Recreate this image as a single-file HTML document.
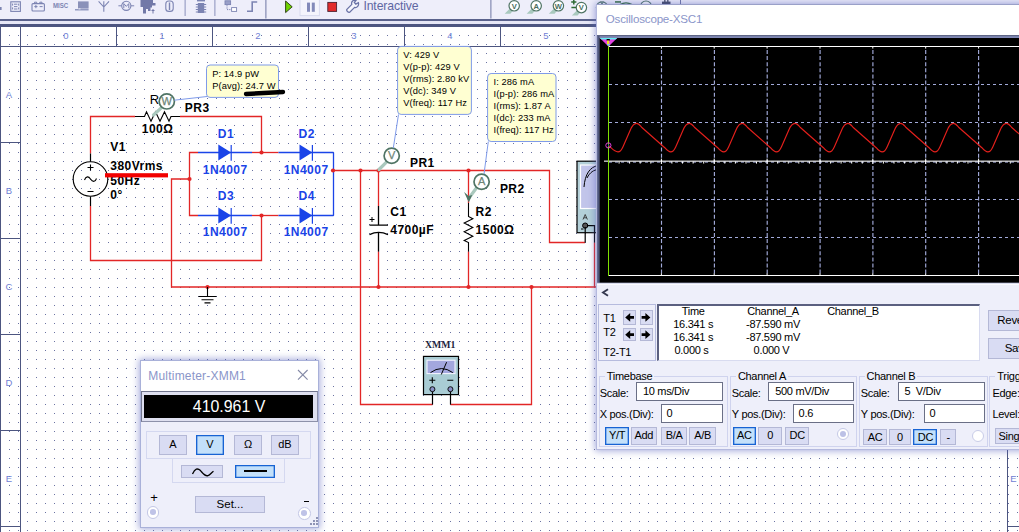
<!DOCTYPE html>
<html>
<head>
<meta charset="utf-8">
<title>Multisim</title>
<style>
html,body{margin:0;padding:0;}
body{width:1019px;height:532px;overflow:hidden;position:relative;background:#fff;font-family:"Liberation Sans",sans-serif;}
.abs{position:absolute;}
#toolbar{left:0;top:0;width:1019px;height:24px;background:#eeeefa;}
#tbline{left:0;top:19px;width:1019px;height:2px;background:#5a628c;}
#tbline2{left:0;top:21px;width:1019px;height:3px;background:#e6e7f6;}
#rtop{left:0;top:24px;width:1019px;height:3px;background:#4c5580;}
#circ{left:0;top:0;}
.t9{font-size:9.3px;fill:#000;letter-spacing:0.1px;}
.bb{font-weight:bold;font-size:12px;fill:#000;letter-spacing:0.47px;}
.bl{font-weight:bold;font-size:12px;fill:#1a44e8;letter-spacing:0.47px;}
/* windows */
.win{position:absolute;background:#eeeffa;border:1px solid #a9b1d9;box-shadow:0 0 7px 1px rgba(90,100,190,0.55);}
.ttl{position:absolute;left:0;top:0;right:0;background:#fff;color:#8a95c9;font-size:12px;}
.btn{position:absolute;background:#d9dcf3;border:1px solid #b4b8d6;box-sizing:border-box;font-size:11px;color:#000;text-align:center;}
.btn.sel{background:#c3e0fa;border:1px solid #1763d3;box-shadow:inset 0 0 0 0.35px #1763d3;}
.lbl{position:absolute;font-size:11px;color:#000;white-space:nowrap;}
.inp{position:absolute;background:#fff;border:1px solid #6a6f86;box-sizing:border-box;font-size:11px;color:#000;white-space:nowrap;}
.grp{position:absolute;border:1px solid #d5d9f0;box-sizing:border-box;}
#scope .lbl,#scope .inp,#scope .btn{letter-spacing:-0.3px;}
</style>
</head>
<body>
<!-- TOOLBAR -->
<div id="toolbar" class="abs"></div>
<div id="tbline" class="abs"></div>
<div id="tbline2" class="abs"></div>
<div id="rtop" class="abs"></div>

<!-- CIRCUIT + RULERS SVG -->
<svg id="circ" class="abs" width="1019" height="532" viewBox="0 0 1019 532">
<defs>
<pattern id="dots" x="9" y="8" width="9" height="9" patternUnits="userSpaceOnUse">
<rect x="0" y="0" width="1" height="1" fill="#6a72a2"/>
</pattern>
</defs>
<rect x="0" y="27" width="1019" height="505" fill="#fff"/>
<rect x="0" y="27" width="1019" height="505" fill="url(#dots)"/>
<!--RULERS-->
<g id="rulers" shape-rendering="crispEdges">
<rect x="0" y="27" width="1" height="505" fill="#4c5580"/>
<rect x="20" y="27" width="1" height="505" fill="#4c5580"/>
<rect x="0" y="46" width="1019" height="1" fill="#4c5580"/>
<rect x="116" y="27" width="1" height="19" fill="#4c5580"/>
<rect x="212" y="27" width="1" height="19" fill="#4c5580"/>
<rect x="308" y="27" width="1" height="19" fill="#4c5580"/>
<rect x="404" y="27" width="1" height="19" fill="#4c5580"/>
<rect x="500" y="27" width="1" height="19" fill="#4c5580"/>
<rect x="596" y="27" width="1" height="19" fill="#4c5580"/>
<rect x="0" y="142" width="20" height="1" fill="#4c5580"/>
<rect x="0" y="238" width="20" height="1" fill="#4c5580"/>
<rect x="0" y="334" width="20" height="1" fill="#4c5580"/>
<rect x="0" y="430" width="20" height="1" fill="#4c5580"/>
<rect x="0" y="526" width="20" height="1" fill="#4c5580"/>
<rect x="1007" y="27" width="1" height="505" fill="#4c5580"/>
<rect x="1007" y="526" width="12" height="1" fill="#4c5580"/>
<text x="66" y="39" text-anchor="middle" font-size="9.5" fill="#6f80d4">0</text>
<text x="162" y="39" text-anchor="middle" font-size="9.5" fill="#6f80d4">1</text>
<text x="258" y="39" text-anchor="middle" font-size="9.5" fill="#6f80d4">2</text>
<text x="354" y="39" text-anchor="middle" font-size="9.5" fill="#6f80d4">3</text>
<text x="450" y="39" text-anchor="middle" font-size="9.5" fill="#6f80d4">4</text>
<text x="546" y="39" text-anchor="middle" font-size="9.5" fill="#6f80d4">5</text>
<text x="9" y="97.5" text-anchor="middle" font-size="9.5" fill="#6f80d4">A</text>
<text x="9" y="193.5" text-anchor="middle" font-size="9.5" fill="#6f80d4">B</text>
<text x="9" y="289.5" text-anchor="middle" font-size="9.5" fill="#6f80d4">C</text>
<text x="9" y="385.5" text-anchor="middle" font-size="9.5" fill="#6f80d4">D</text>
<text x="9" y="481.5" text-anchor="middle" font-size="9.5" fill="#6f80d4">E</text>
<text x="1013.5" y="481.5" text-anchor="middle" font-size="9.5" fill="#6f80d4">E</text>
</g>
<!--WIRES-->
<g id="wires">
<polyline points="90.5,153.5 90.5,116.5 135,116.5" fill="none" stroke="#e22626" stroke-width="1.3"/>
<polyline points="180,116.5 261.5,116.5 261.5,152.5" fill="none" stroke="#e22626" stroke-width="1.3"/>
<polyline points="90.5,206 90.5,260.5 261.5,260.5 261.5,215.5" fill="none" stroke="#e22626" stroke-width="1.3"/>
<polyline points="198,152.5 189.5,152.5 189.5,215.5 198,215.5" fill="none" stroke="#e22626" stroke-width="1.3"/>
<polyline points="189.5,179 171.5,179 171.5,287 597,287" fill="none" stroke="#e22626" stroke-width="1.3"/>
<polyline points="252,152.5 278.5,152.5" fill="none" stroke="#e22626" stroke-width="1.3"/>
<polyline points="252,215.5 278.5,215.5" fill="none" stroke="#e22626" stroke-width="1.3"/>
<polyline points="333.5,152.5 333.5,215.5" fill="none" stroke="#1a44e8" stroke-width="1.3"/>
<polyline points="333.5,170.5 549.5,170.5 549.5,242.5 585,242.5" fill="none" stroke="#e22626" stroke-width="1.3"/>
<polyline points="360.5,170.5 360.5,404.5 432.5,404.5" fill="none" stroke="#e22626" stroke-width="1.3"/>
<polyline points="531.5,287 531.5,404.5 450.5,404.5" fill="none" stroke="#e22626" stroke-width="1.3"/>
<polyline points="378.5,170.5 378.5,206" fill="none" stroke="#e22626" stroke-width="1.3"/>
<polyline points="378.5,251.5 378.5,287" fill="none" stroke="#e22626" stroke-width="1.3"/>
<polyline points="468.5,170.5 468.5,203" fill="none" stroke="#e22626" stroke-width="1.3"/>
<polyline points="468.5,251.5 468.5,287" fill="none" stroke="#e22626" stroke-width="1.3"/>
<polyline points="594.5,242.5 594.5,287" fill="none" stroke="#e22626" stroke-width="1.3"/>
<circle cx="261.5" cy="152.5" r="2.1" fill="#e22626"/>
<circle cx="261.5" cy="215.5" r="2.1" fill="#e22626"/>
<circle cx="189.5" cy="179" r="2.1" fill="#e22626"/>
<circle cx="333" cy="170.5" r="2.1" fill="#e22626"/>
<circle cx="360.5" cy="170.5" r="2.1" fill="#e22626"/>
<circle cx="378.5" cy="170.5" r="2.1" fill="#e22626"/>
<circle cx="468.5" cy="170.5" r="2.1" fill="#e22626"/>
<circle cx="207.5" cy="287" r="2.1" fill="#e22626"/>
<circle cx="378.5" cy="287" r="2.1" fill="#e22626"/>
<circle cx="468.5" cy="287" r="2.1" fill="#e22626"/>
<circle cx="531.5" cy="287" r="2.1" fill="#e22626"/>
</g>
<!--PARTS-->
<g id="parts">
<line x1="90.5" y1="153.5" x2="90.5" y2="161.5" stroke="#000" stroke-width="1.2"/>
<line x1="90.5" y1="196.5" x2="90.5" y2="206" stroke="#000" stroke-width="1.2"/>
<circle cx="90.5" cy="179" r="17.3" fill="none" stroke="#000" stroke-width="1.1"/>
<path d="M87.5,167.5h6M90.5,164.5v6M87.5,191.5h6" stroke="#000" stroke-width="1.1" fill="none"/>
<path d="M84.5,180 C86,176 88.5,176 90.5,179 S95,182.5 96.5,178.5" stroke="#000" stroke-width="1.1" fill="none"/>
<text class="bb" x="110.3" y="151.2">V1</text>
<text class="bb" x="110.3" y="169.5">380Vrms</text>
<text class="bb" x="110.3" y="184.5">50Hz</text>
<text class="bb" x="110.3" y="199.2">0°</text>
<rect x="105" y="173.2" width="63" height="4.2" fill="#f20000"/>
<polyline points="135,116.5 144.5,116.5 146.5,111.8 151,121.2 155.5,111.8 160,121.2 164.5,111.8 169,121.2 171,116.5 180,116.5" fill="none" stroke="#000" stroke-width="1.1"/>
<text class="bb" x="149.8" y="103.8" style="font-weight:normal;font-size:13px">R</text>
<text class="bb" x="141.8" y="133.4">100Ω</text>
<text class="bb" x="184.8" y="112.4">PR3</text>
<line x1="198" y1="152.5" x2="252" y2="152.5" stroke="#1a44e8" stroke-width="1.3"/>
<polygon points="218.3,144.5 231.10000000000002,152.5 218.3,160.5" fill="#1a44e8"/>
<line x1="231.20000000000002" y1="144.9" x2="231.20000000000002" y2="160.7" stroke="#1a44e8" stroke-width="1.2"/>
<text class="bl" x="217.8" y="137.6">D1</text>
<text class="bl" x="202.8" y="173.5">1N4007</text>
<line x1="278.5" y1="152.5" x2="333.5" y2="152.5" stroke="#1a44e8" stroke-width="1.3"/>
<polygon points="299.5,144.5 312.3,152.5 299.5,160.5" fill="#1a44e8"/>
<line x1="312.4" y1="144.9" x2="312.4" y2="160.7" stroke="#1a44e8" stroke-width="1.2"/>
<text class="bl" x="298.6" y="137.6">D2</text>
<text class="bl" x="283.7" y="173.5">1N4007</text>
<line x1="198" y1="215.5" x2="252" y2="215.5" stroke="#1a44e8" stroke-width="1.3"/>
<polygon points="218.3,207.5 231.10000000000002,215.5 218.3,223.5" fill="#1a44e8"/>
<line x1="231.20000000000002" y1="207.9" x2="231.20000000000002" y2="223.7" stroke="#1a44e8" stroke-width="1.2"/>
<text class="bl" x="217.8" y="200.4">D3</text>
<text class="bl" x="202.8" y="236.4">1N4007</text>
<line x1="278.5" y1="215.5" x2="333.5" y2="215.5" stroke="#1a44e8" stroke-width="1.3"/>
<polygon points="299.5,207.5 312.3,215.5 299.5,223.5" fill="#1a44e8"/>
<line x1="312.4" y1="207.9" x2="312.4" y2="223.7" stroke="#1a44e8" stroke-width="1.2"/>
<text class="bl" x="298.6" y="200.4">D4</text>
<text class="bl" x="283.7" y="236.4">1N4007</text>
<path d="M207.5,287V296.5M198.5,296.5h18M201.5,299.7h12M204.5,302.9h6" stroke="#000" stroke-width="1.1" fill="none"/>
<path d="M378.5,206V225M369.5,225.2h18.5M378.5,232.6V251.5" stroke="#000" stroke-width="1.3" fill="none"/>
<path d="M369.5,234.6 Q378.5,230.2 388,234.6" stroke="#000" stroke-width="1.3" fill="none"/>
<path d="M369.5,219.5h5M372,217v5" stroke="#000" stroke-width="1" fill="none"/>
<text class="bb" x="390.3" y="215.7">C1</text>
<text class="bb" x="390.3" y="234">4700µF</text>
<polyline points="468.5,203 468.5,216.5 472.8,218.7 464.2,223 472.8,227.4 464.2,231.8 472.8,236.2 464.2,240.5 468.5,242.6 468.5,251.5" fill="none" stroke="#000" stroke-width="1.1"/>
<text class="bb" x="475.6" y="215.7">R2</text>
<text class="bb" x="475.6" y="234">1500Ω</text>
<text class="bb" x="410" y="166.6">PR1</text>
<text class="bb" x="499.9" y="193.3">PR2</text>
<line x1="161.8" y1="107.4" x2="153.5" y2="115" stroke="#a9c8bd" stroke-width="3.2" stroke-linecap="round"/>
<circle cx="166.8" cy="101.4" r="7.6" fill="#fff" stroke="#4f7464" stroke-width="1.7"/>
<text x="166.8" y="105.0" text-anchor="middle" font-size="11" fill="#6e8578" stroke="#6e8578" stroke-width="0.25">W</text>
<line x1="386.7" y1="161.8" x2="379" y2="169.5" stroke="#a9c8bd" stroke-width="3.2" stroke-linecap="round"/>
<circle cx="391.7" cy="155.8" r="7.6" fill="#fff" stroke="#4f7464" stroke-width="1.7"/>
<text x="391.7" y="159.4" text-anchor="middle" font-size="11" fill="#6e8578" stroke="#6e8578" stroke-width="0.25">V</text>
<line x1="476.6" y1="187.8" x2="468.6" y2="198.5" stroke="#a9c8bd" stroke-width="3.2" stroke-linecap="round"/>
<path d="M464.1,192.0 L468.8,202.5 L472.20000000000005,195.0 L468.6,196.0Z" fill="#4f7464"/>
<circle cx="481.6" cy="181.8" r="7.6" fill="#fff" stroke="#4f7464" stroke-width="1.7"/>
<text x="481.6" y="185.4" text-anchor="middle" font-size="11" fill="#6e8578" stroke="#6e8578" stroke-width="0.25">A</text>
<polyline points="174.3,100.2 207,96.5" fill="none" stroke="#7f9bea" stroke-width="1"/>
<polyline points="393.3,148 398.5,114.5" fill="none" stroke="#7f9bea" stroke-width="1"/>
<polyline points="484,174 488.3,141.5" fill="none" stroke="#7f9bea" stroke-width="1"/>
<rect x="206.5" y="65" width="72" height="32.4" rx="3.5" ry="3.5" fill="#ffffd2" stroke="#7f9bea" stroke-width="1"/>
<text class="t9" x="212.2" y="76.8">P: 14.9 pW</text>
<text class="t9" x="212.2" y="89.0">P(avg): 24.7 W</text>
<rect x="397.6" y="46.4" width="73.8" height="68" rx="3.5" ry="3.5" fill="#ffffd2" stroke="#7f9bea" stroke-width="1"/>
<text class="t9" x="403.2" y="58.1">V: 429 V</text>
<text class="t9" x="403.2" y="70.12">V(p-p): 429 V</text>
<text class="t9" x="403.2" y="82.14">V(rms): 2.80 kV</text>
<text class="t9" x="403.2" y="94.16">V(dc): 349 V</text>
<text class="t9" x="403.2" y="106.18">V(freq): 117 Hz</text>
<rect x="487.6" y="73.5" width="68.4" height="68" rx="3.5" ry="3.5" fill="#ffffd2" stroke="#7f9bea" stroke-width="1"/>
<text class="t9" x="493.5" y="84.5">I: 286 mA</text>
<text class="t9" x="493.5" y="96.52">I(p-p): 286 mA</text>
<text class="t9" x="493.5" y="108.53999999999999">I(rms): 1.87 A</text>
<text class="t9" x="493.5" y="120.56">I(dc): 233 mA</text>
<text class="t9" x="493.5" y="132.57999999999998">I(freq): 117 Hz</text>
<line x1="246" y1="94" x2="283" y2="92" stroke="#000" stroke-width="4.4" stroke-linecap="round"/>
<rect x="577" y="161.2" width="24" height="71.5" fill="#b3d0d8" stroke="#000" stroke-width="1.2"/>
<rect x="580.5" y="165" width="22" height="43.5" fill="#c2c5ea" stroke="#fff" stroke-width="1.2"/>
<path d="M584,187 C585,174 590,167 598,165.5 M587,178 C590,172 594,170 598,169.5" stroke="#000" stroke-width="1" fill="none"/>
<path d="M583,219.5 L585.2,214.5 L587.4,219.5 M583.8,217.8h2.8" stroke="#333" stroke-width="0.9" fill="none"/>
<circle cx="585.2" cy="225.6" r="2.6" fill="#555" stroke="#000" stroke-width="1"/>
<path d="M581,229h2.5" stroke="#000" stroke-width="1"/>
<polyline points="585.2,227 585.2,242.5" fill="none" stroke="#000" stroke-width="1.2"/>
<polyline points="587,225.6 594.5,225.6 594.5,242.5" fill="none" stroke="#000" stroke-width="1.2"/>
<text x="425" y="348.4" font-family="Liberation Serif" font-weight="bold" font-size="10.6" textLength="30.4" lengthAdjust="spacingAndGlyphs" fill="#1d1f3d">XMM1</text>
<rect x="423.5" y="356.4" width="35" height="38.2" fill="#a9ccd4" stroke="#000" stroke-width="1.2"/>
<rect x="427" y="360.2" width="28" height="13.4" fill="#a3a7de" stroke="#f4f4ff" stroke-width="1.1"/>
<path d="M430.5,372.6 Q441.5,364.5 452.8,372.6 M441.3,374.5 L446.6,362.2" stroke="#000" stroke-width="1" fill="none"/>
<path d="M429.3,380.3h6M432.3,377.3v6M447.3,380.3h6" stroke="#000" stroke-width="1.1" fill="none"/>
<circle cx="432.4" cy="389.2" r="2.5" fill="#8a90c6" stroke="#000" stroke-width="0.9"/>
<circle cx="450.4" cy="389.2" r="2.5" fill="#8a90c6" stroke="#000" stroke-width="0.9"/>
<path d="M432.5,391.8V404.5M450.5,391.8V404.5" stroke="#000" stroke-width="1.2"/>
</g>
</svg>

<svg class="abs" style="left:0;top:0" width="1019" height="20" viewBox="0 0 1019 20">
<rect x="0" y="7" width="1.6" height="3" fill="#7c84b2"/>
<rect x="10.8" y="1.8" width="9.6" height="9.6" fill="none" stroke="#7c84b2" stroke-width="1.1"/>
<path d="M14,4.2h3.4M14,6.6h3.4M14,9h3.4M12.6,3.6v2M12.6,7.4v2M18.7,3.6v2M18.7,7.4v2" stroke="#7c84b2" stroke-width="1" fill="none"/>
<rect x="32" y="3.6" width="12.4" height="7.4" rx="1" fill="none" stroke="#7c84b2" stroke-width="1.1"/>
<path d="M34.5,3.4v-1.2h2.2v1.2M39.8,3.4v-1.2h2.2v1.2M34.3,6.6h3.2M35.9,5v3.2M39.6,6.6h3" stroke="#7c84b2" stroke-width="1" fill="none"/>
<text x="53" y="8.1" font-size="6.8" font-weight="bold" fill="#7c84b2" textLength="15.2" lengthAdjust="spacingAndGlyphs">MISC</text>
<rect x="78" y="1.4" width="10.6" height="7.2" fill="#8a91b9"/>
<rect x="75" y="9.2" width="13.6" height="1.2" fill="#7c84b2"/>
<rect x="78.5" y="8.4" width="2" height="1" fill="#eeeefa"/>
<path d="M103.8,1.2V11.8M98.6,1.4L103.8,7L109,1.4" stroke="#7c84b2" stroke-width="1.1" fill="none"/>
<circle cx="126.3" cy="5.8" r="4.6" fill="none" stroke="#7c84b2" stroke-width="1.1"/>
<path d="M118.4,5.8h3.2M131,5.8h3.2M123.8,8.2V3.6L126.3,6.4L128.8,3.6V8.2" stroke="#7c84b2" stroke-width="1" fill="none"/>
<path d="M140.5,0H153V3H155.5V5.5H152V7.5H150.5V11H148V9H146V13.5H143V7H140.5Z" fill="#7279a8"/>
<path d="M151.5,10.5h3M153,9v4.5" stroke="#7279a8" stroke-width="1" fill="none"/>
<rect x="165.8" y="1" width="7.4" height="10.4" rx="3" fill="none" stroke="#7c84b2" stroke-width="1.1"/>
<path d="M169.5,2.5v7.5" stroke="#7c84b2" stroke-width="1.4"/>
<rect x="184.6" y="0" width="1" height="16" fill="#8a91bc"/>
<rect x="214.4" y="0" width="1" height="16" fill="#8a91bc"/>
<rect x="265.4" y="0" width="1" height="18.5" fill="#6f77a4"/>
<rect x="490.4" y="0" width="1" height="18.5" fill="#6f77a4"/>
<rect x="680" y="0" width="1" height="18.5" fill="#6f77a4"/>
<rect x="197.8" y="3" width="6.4" height="10" fill="#7c84b2"/>
<path d="M195.8,4.5h10.4M195.8,7h10.4M195.8,9.5h10.4M195.8,12h10.4" stroke="#7c84b2" stroke-width="1" fill="none"/>
<rect x="197" y="0" width="8" height="1.4" fill="#7c84b2"/>
<rect x="225" y="0.8" width="5.6" height="3.8" fill="#9aa0c8" stroke="#7c84b2" stroke-width="0.9"/>
<rect x="231.6" y="7.6" width="5" height="3.8" fill="#fff" stroke="#7c84b2" stroke-width="0.9"/>
<path d="M227,5.2v4.4h4" stroke="#7c84b2" stroke-width="1" fill="none" stroke-dasharray="1.2 1"/>
<path d="M247,11.2h5.2V2h5" stroke="#7c84b2" stroke-width="1.6" fill="none"/>
<polygon points="285.6,1 292.2,6.8 285.6,12.6" fill="#6fd400" stroke="#26340d" stroke-width="0.9"/>
<rect x="300" y="-1" width="19.4" height="16.6" fill="#f4f4fc" stroke="#d7daee" stroke-width="1"/>
<rect x="307" y="2.6" width="3" height="9.2" fill="#838ab9"/><rect x="311.8" y="2.6" width="3" height="9.2" fill="#838ab9"/>
<rect x="327.8" y="2.4" width="8.8" height="9" fill="#e22b2b" stroke="#4a2030" stroke-width="0.9"/>
<path d="M349.7,12.2 C348.4,12.9 346,10.6 346.9,9.3 L351.8,4.4 C351,2 352.8,-0.2 356,0.3 L354.3,2.5 L355.8,4.1 L358.4,2.6 C359.2,5.6 357,8 354.6,7.4 Z" fill="#f6f6fd" stroke="#6a72a6" stroke-width="1.25"/>
<text x="363.4" y="9.8" font-size="12.2" letter-spacing="-0.1" fill="#5e66a2" id="inter">Interactive</text>
<path d="M504.6,13.799999999999999 L510.4,13.799999999999999 L513.0,10.4 L509.6,8.8 Z" fill="#a9c9be"/>
<circle cx="514.2" cy="5.8" r="5.2" fill="#fff" stroke="#4f7464" stroke-width="1.2"/>
<text x="514.2" y="8.5" text-anchor="middle" font-size="7.6" font-weight="bold" fill="#4a6e5e">V</text>
<path d="M526.6,13.799999999999999 L532.4,13.799999999999999 L535.0,10.4 L531.6,8.8 Z" fill="#a9c9be"/>
<circle cx="536.2" cy="5.8" r="5.2" fill="#fff" stroke="#4f7464" stroke-width="1.2"/>
<text x="536.2" y="8.5" text-anchor="middle" font-size="7.6" font-weight="bold" fill="#4a6e5e">A</text>
<path d="M548.8,13.799999999999999 L554.6,13.799999999999999 L557.2,10.4 L553.8,8.8 Z" fill="#a9c9be"/>
<circle cx="558.4" cy="5.8" r="5.2" fill="#fff" stroke="#4f7464" stroke-width="1.2"/>
<text x="558.4" y="8.5" text-anchor="middle" font-size="7.6" font-weight="bold" fill="#4a6e5e">W</text>
<path d="M571.8,15.6 L577.6,15.6 L580.2,12.2 L576.8,10.6 Z" fill="#a9c9be"/>
<circle cx="581.4" cy="7.6" r="5.2" fill="#fff" stroke="#4f7464" stroke-width="1.2"/>
<text x="581.4" y="10.3" text-anchor="middle" font-size="7.6" font-weight="bold" fill="#4a6e5e">V</text>
<path d="M571.2,2h5.2M573.8,-0.6v5.2M571.4,7.6h4.8" stroke="#2f6b35" stroke-width="1.5" fill="none"/>
<circle cx="602" cy="7.4" r="5.6" fill="#fff" stroke="#4f7464" stroke-width="1.2"/>
<path d="M600.5,1.6l1.5,2.4l1.5,-2.4" stroke="#4f7464" stroke-width="1" fill="none"/>
<rect x="615" y="1.2" width="6" height="1.5" fill="#2f6b35"/>
<path d="M620,4.6 Q626,1.2 632,4.6" stroke="#2f6b35" stroke-width="1.3" fill="none"/>
<circle cx="646" cy="6.6" r="5.6" fill="#fff" stroke="#4f7464" stroke-width="1.2"/>
<rect x="662" y="1.6" width="8.5" height="3.2" fill="#3f4760"/><rect x="664" y="0.2" width="1.6" height="1.6" fill="#3f4760"/><rect x="667" y="0.2" width="1.6" height="1.6" fill="#3f4760"/>
</svg>
<div id="mm" class="win" style="left:139.5px;top:360.2px;width:177.6px;height:166px;">
<div class="ttl" style="height:30px;"><span id="mttl" style="position:absolute;left:7.8px;top:7.5px;font-size:12px;letter-spacing:0.2px;white-space:nowrap;">Multimeter-XMM1</span>
<svg style="position:absolute;left:156.9px;top:8.0px" width="12" height="12" viewBox="0 0 12 12"><path d="M1,1L10.6,10.6M10.6,1L1,10.6" stroke="#8489a6" stroke-width="1.1" fill="none"/></svg></div>
<div class="abs" style="left:0.7px;top:30.0px;width:176.4px;height:31px;box-sizing:border-box;background:#dfe0f0;border:1.2px solid #72768e;border-right-color:#8d91aa;border-bottom-color:#8d91aa;"></div>
<div class="abs" style="left:3.6px;top:34.1px;width:169.4px;height:22.9px;background:#000;color:#fff;font-size:15.9px;text-align:center;line-height:23.6px;"><span id="mval" style="position:relative;left:0.3px;">410.961 V</span></div>
<div class="grp" style="left:5.9px;top:69.8px;width:165.1px;height:28px;border-color:#d4d8f0;"></div>
<div class="grp" style="left:31.0px;top:96.8px;width:113.2px;height:25.2px;border-color:#d4d8f0;"></div>
<div class="btn" style="left:18.5px;top:74.0px;width:27.8px;height:19.5px;line-height:17.1px;">A</div>
<div class="btn sel" style="left:55.4px;top:74.0px;width:28.0px;height:19.5px;line-height:17.1px;">V</div>
<div class="btn" style="left:93.7px;top:74.0px;width:27.8px;height:19.5px;line-height:17.1px;">Ω</div>
<div class="btn" style="left:130.5px;top:74.0px;width:27.8px;height:19.5px;line-height:17.1px;">dB</div>
<div class="btn" style="left:40.7px;top:103.6px;width:41.4px;height:13.7px;line-height:11.3px;"><svg style="position:absolute;left:8.5px;top:1px" width="24" height="10" viewBox="0 0 24 10"><path d="M1.5,7 C4,1.5 6.5,0.8 9.5,3.6 C12,6.5 14,9.6 17,8.6 C19,8 20.5,5.5 22.5,4.2" fill="none" stroke="#000" stroke-width="1.3"/></svg></div>
<div class="btn sel" style="left:94.3px;top:103.6px;width:40.0px;height:13.7px;line-height:11.3px;"><div style="position:absolute;left:8.6px;top:4.6px;width:22.6px;height:1.7px;background:#000"></div></div>
<div class="btn" style="left:54.8px;top:135.0px;width:69.4px;height:16.4px;line-height:14.0px;font-size:11.5px;">Set...</div>
<div class="lbl" style="left:9.7px;top:129.3px;font-size:13px;">+</div>
<div class="abs" style="left:163.1px;top:140.3px;width:5.4px;height:1px;background:#000;"></div>
<div class="abs" style="left:6.4px;top:145.1px;width:12.6px;height:12.6px;box-sizing:border-box;border-radius:50%;background:#fff;border:1.3px solid #c3c7e6;"><div style="position:absolute;left:2.2px;top:2.2px;width:5.6px;height:5.6px;border-radius:50%;background:#bfc3e7;"></div></div>
<div class="abs" style="left:157.5px;top:145.8px;width:12.6px;height:12.6px;box-sizing:border-box;border-radius:50%;background:#fff;border:1.3px solid #c3c7e6;"><div style="position:absolute;left:2.2px;top:2.2px;width:5.6px;height:5.6px;border-radius:50%;background:#bfc3e7;"></div></div>
<div class="abs" style="left:175.5px;top:156.3px;width:1.8px;height:1.8px;background:#8e93b4;"></div><div class="abs" style="left:172.5px;top:159.3px;width:1.8px;height:1.8px;background:#8e93b4;"></div><div class="abs" style="left:175.5px;top:159.3px;width:1.8px;height:1.8px;background:#8e93b4;"></div><div class="abs" style="left:169.5px;top:162.3px;width:1.8px;height:1.8px;background:#8e93b4;"></div><div class="abs" style="left:172.5px;top:162.3px;width:1.8px;height:1.8px;background:#8e93b4;"></div><div class="abs" style="left:175.5px;top:162.3px;width:1.8px;height:1.8px;background:#8e93b4;"></div>
</div>
<div id="scope" class="win" style="left:596px;top:4px;width:440px;height:443.5px;border-color:#9aa0c8 #b4b9de #b4b9de #b4b9de;">
<div class="ttl" style="height:30px;"><span id="sttl" style="position:absolute;left:8.8px;top:7.2px;font-size:11.6px;letter-spacing:-0.2px;white-space:nowrap;">Oscilloscope-XSC1</span></div>
<svg class="abs" style="left:0;top:30px" width="422" height="250" viewBox="597 35 422 250"><rect x="597" y="35" width="430" height="250" fill="#6d7599"/>
<rect x="597" y="35" width="430" height="1.3" fill="#5d6485"/>
<rect x="597" y="36.3" width="430" height="1.7" fill="#8189b6"/>
<rect x="597" y="36" width="1" height="248" fill="#626a92"/>
<rect x="598" y="36" width="1.6" height="248" fill="#4e567c"/>
<rect x="599.6" y="38" width="430" height="244.8" fill="#000"/>
<rect x="597" y="282.8" width="430" height="1.2" fill="#d9dbee"/>
<rect x="597" y="284" width="430" height="1" fill="#fbfbff"/>
<line x1="661.5" y1="50" x2="661.5" y2="275" stroke="#a2aada" stroke-width="1.15" stroke-dasharray="4 2.1"/>
<line x1="714.4" y1="50" x2="714.4" y2="275" stroke="#a2aada" stroke-width="1.15" stroke-dasharray="4 2.1"/>
<line x1="767.2" y1="50" x2="767.2" y2="275" stroke="#a2aada" stroke-width="1.15" stroke-dasharray="4 2.1"/>
<line x1="820.1" y1="50" x2="820.1" y2="275" stroke="#a2aada" stroke-width="1.15" stroke-dasharray="4 2.1"/>
<line x1="872.9" y1="50" x2="872.9" y2="275" stroke="#a2aada" stroke-width="1.15" stroke-dasharray="4 2.1"/>
<line x1="925.7" y1="50" x2="925.7" y2="275" stroke="#a2aada" stroke-width="1.15" stroke-dasharray="4 2.1"/>
<line x1="978.6" y1="50" x2="978.6" y2="275" stroke="#a2aada" stroke-width="1.15" stroke-dasharray="4 2.1"/>
<line x1="609" y1="84.5" x2="1030" y2="84.5" stroke="#a2aada" stroke-width="1.15" stroke-dasharray="3 3"/>
<line x1="609" y1="122.5" x2="1030" y2="122.5" stroke="#a2aada" stroke-width="1.15" stroke-dasharray="3 3"/>
<line x1="609" y1="199.5" x2="1030" y2="199.5" stroke="#a2aada" stroke-width="1.15" stroke-dasharray="3 3"/>
<line x1="609" y1="237.5" x2="1030" y2="237.5" stroke="#a2aada" stroke-width="1.15" stroke-dasharray="3 3"/>
<rect x="609" y="46" width="420" height="1" fill="#fff"/>
<rect x="609" y="275" width="420" height="1" fill="#fff"/>
<line x1="609" y1="162.1" x2="1030" y2="162.1" stroke="#a2aada" stroke-width="1" stroke-dasharray="3 3"/><rect x="604" y="160.6" width="425" height="1.1" fill="#fff"/>
<path d="M608.5,158.6v5.4M608.5,47v1.6M608.5,273.3v1.9M619.1,161.5v2.1M629.6,161.5v2.1M640.2,161.5v2.1M650.8,161.5v2.1M661.4,158.6v5.4M661.4,47v1.6M661.4,273.3v1.9M671.9,161.5v2.1M682.5,161.5v2.1M693.1,161.5v2.1M703.7,161.5v2.1M714.2,158.6v5.4M714.2,47v1.6M714.2,273.3v1.9M724.8,161.5v2.1M735.4,161.5v2.1M746.0,161.5v2.1M756.5,161.5v2.1M767.1,158.6v5.4M767.1,47v1.6M767.1,273.3v1.9M777.7,161.5v2.1M788.3,161.5v2.1M798.8,161.5v2.1M809.4,161.5v2.1M820.0,158.6v5.4M820.0,47v1.6M820.0,273.3v1.9M830.6,161.5v2.1M841.1,161.5v2.1M851.7,161.5v2.1M862.3,161.5v2.1M872.8,158.6v5.4M872.8,47v1.6M872.8,273.3v1.9M883.4,161.5v2.1M894.0,161.5v2.1M904.6,161.5v2.1M915.1,161.5v2.1M925.7,158.6v5.4M925.7,47v1.6M925.7,273.3v1.9M936.3,161.5v2.1M946.9,161.5v2.1M957.4,161.5v2.1M968.0,161.5v2.1M978.6,158.6v5.4M978.6,47v1.6M978.6,273.3v1.9M989.2,161.5v2.1M999.7,161.5v2.1M1010.3,161.5v2.1M1020.9,161.5v2.1" stroke="#fff" stroke-width="1" fill="none"/>
<path d="M608.4,145.4 C611.5,148 614.5,151.9 618,151.9 C619.8,151.9 621.4,150.3 623.0,146.7 L630.2,130.2 C632.0,126.0 634.4,123.4 636.6,123.4 C638.4,123.4 639.6,125.0 641.6,127.2 L664.8,147.7 C667.0,150.3 668.8,151.9 670.8,151.9 C672.6,151.9 674.2,150.3 675.8,146.7 L683.0,130.2 C684.8,126.0 687.2,123.4 689.4,123.4 C691.2,123.4 692.4,125.0 694.4,127.2 L717.7,147.7 C719.9,150.3 721.7,151.9 723.7,151.9 C725.5,151.9 727.1,150.3 728.7,146.7 L735.9,130.2 C737.7,126.0 740.1,123.4 742.3,123.4 C744.1,123.4 745.3,125.0 747.3,127.2 L770.5,147.7 C772.7,150.3 774.5,151.9 776.5,151.9 C778.3,151.9 779.9,150.3 781.5,146.7 L788.7,130.2 C790.5,126.0 792.9,123.4 795.1,123.4 C796.9,123.4 798.1,125.0 800.1,127.2 L823.4,147.7 C825.6,150.3 827.4,151.9 829.4,151.9 C831.2,151.9 832.8,150.3 834.4,146.7 L841.6,130.2 C843.4,126.0 845.8,123.4 848.0,123.4 C849.8,123.4 851.0,125.0 853.0,127.2 L876.2,147.7 C878.4,150.3 880.2,151.9 882.2,151.9 C884.0,151.9 885.6,150.3 887.2,146.7 L894.4,130.2 C896.2,126.0 898.6,123.4 900.8,123.4 C902.6,123.4 903.8,125.0 905.8,127.2 L929.0,147.7 C931.2,150.3 933.0,151.9 935.0,151.9 C936.8,151.9 938.4,150.3 940.0,146.7 L947.2,130.2 C949.0,126.0 951.4,123.4 953.6,123.4 C955.4,123.4 956.6,125.0 958.6,127.2 L981.9,147.7 C984.1,150.3 985.9,151.9 987.9,151.9 C989.7,151.9 991.3,150.3 992.9,146.7 L1000.1,130.2 C1001.9,126.0 1004.3,123.4 1006.5,123.4 C1008.3,123.4 1009.5,125.0 1011.5,127.2 L1034.7,147.7 C1036.9,150.3 1038.7,151.9 1040.7,151.9 " stroke="#e4201c" stroke-width="1.15" fill="none" stroke-linejoin="round"/>
<rect x="608" y="46" width="1" height="230" fill="#7fe000"/>
<polygon points="599.8,38 617.2,38 608.5,46.6" fill="#e443e4"/>
<polygon points="599.8,38 617.2,38 615.6,39.6 601.4,39.6" fill="#5ff1f1"/>
<rect x="606.6" y="39" width="3.2" height="1.6" fill="#000"/>
<rect x="607" y="40.6" width="2.2" height="3.4" fill="#f2e320"/>
<rect x="607" y="44.2" width="3" height="1.2" fill="#5ff1f1"/>
<circle cx="608.4" cy="145.4" r="2.6" fill="none" stroke="#e040e0" stroke-width="1"/>
<rect x="608" y="144.6" width="1" height="1.6" fill="#2030c0"/></svg>
<svg class="abs" style="left:4px;top:283px" width="10" height="10" viewBox="0 0 10 10"><polyline points="7,1.2 2,4.5 7,7.8" fill="none" stroke="#34384f" stroke-width="1.9"/></svg>
<div class="grp" style="left:1px;top:298.5px;width:58px;height:57.5px;border-color:#b6bbde;"></div>
<div class="lbl" style="left:6.3px;top:306.9px;">T1</div>
<div class="lbl" style="left:6.3px;top:320.9px;">T2</div>
<div class="lbl" style="left:6.3px;top:340.8px;">T2-T1</div>
<div class="btn" style="left:26.1px;top:305.4px;width:12.6px;height:14.8px;"><svg style="position:absolute;left:-1px;top:-1px" width="12.6" height="14.8" viewBox="0 0 12.6 14.8"><path d="M2.20,7.40 L7.20,3.00 V6.10 H11.00 V8.70 H7.20 V11.80 Z" fill="#000"/></svg></div>
<div class="btn" style="left:43.2px;top:305.4px;width:12.6px;height:14.8px;"><svg style="position:absolute;left:-1px;top:-1px" width="12.6" height="14.8" viewBox="0 0 12.6 14.8"><path d="M10.40,7.40 L5.40,3.00 V6.10 H1.60 V8.70 H5.40 V11.80 Z" fill="#000"/></svg></div>
<div class="btn" style="left:26.1px;top:323.2px;width:12.6px;height:13.3px;"><svg style="position:absolute;left:-1px;top:-1px" width="12.6" height="13.3" viewBox="0 0 12.6 13.3"><path d="M2.20,6.65 L7.20,2.25 V5.35 H11.00 V7.95 H7.20 V11.05 Z" fill="#000"/></svg></div>
<div class="btn" style="left:43.2px;top:323.2px;width:12.6px;height:13.3px;"><svg style="position:absolute;left:-1px;top:-1px" width="12.6" height="13.3" viewBox="0 0 12.6 13.3"><path d="M10.40,6.65 L5.40,2.25 V5.35 H1.60 V7.95 H5.40 V11.05 Z" fill="#000"/></svg></div>
<div class="abs" style="left:60px;top:298.5px;width:322.5px;height:57.5px;background:#fff;box-sizing:border-box;border:1px solid #d8dbf0;border-left:2px solid #5b6080;border-top:2px solid #5b6080;"></div>
<div class="lbl" style="left:36.2px;width:120px;text-align:center;top:300.4px;">Time</div>
<div class="lbl" style="left:116px;width:120px;text-align:center;top:300.4px;">Channel_A</div>
<div class="lbl" style="left:196px;width:120px;text-align:center;top:300.4px;">Channel_B</div>
<div class="lbl" style="left:36.2px;width:120px;text-align:center;top:313.3px;">16.341 s</div>
<div class="lbl" style="left:116px;width:120px;text-align:center;top:313.3px;">-87.590 mV</div>
<div class="lbl" style="left:36.2px;width:120px;text-align:center;top:326.3px;">16.341 s</div>
<div class="lbl" style="left:116px;width:120px;text-align:center;top:326.3px;">-87.590 mV</div>
<div class="lbl" style="left:34.5px;width:120px;text-align:center;top:339.2px;">0.000 s</div>
<div class="lbl" style="left:114.5px;width:120px;text-align:center;top:339.2px;">0.000 V</div>
<div class="btn" style="left:391.3px;top:305.4px;width:60px;height:20.4px;text-align:left;padding-left:8px;line-height:19.5px;font-size:11.5px;">Reverse</div>
<div class="btn" style="left:391.3px;top:333.2px;width:60px;height:20.4px;text-align:left;padding-left:15.4px;line-height:19.5px;font-size:11.5px;">Save</div>
<div class="grp" style="left:1.5px;top:370.5px;width:129.89999999999998px;height:71px;border-color:#cfd3ee;"></div>
<div class="lbl" style="left:7.8px;top:364.5px;background:#eeeffa;padding:0 2px;">Timebase</div>
<div class="grp" style="left:132.8px;top:370.5px;width:127.40000000000009px;height:71px;border-color:#cfd3ee;"></div>
<div class="lbl" style="left:138.9px;top:364.5px;background:#eeeffa;padding:0 2px;">Channel A</div>
<div class="grp" style="left:262px;top:370.5px;width:128.5px;height:71px;border-color:#cfd3ee;"></div>
<div class="lbl" style="left:267.6px;top:364.5px;background:#eeeffa;padding:0 2px;">Channel B</div>
<div class="grp" style="left:392px;top:370.5px;width:61px;height:71px;border-color:#cfd3ee;"></div>
<div class="lbl" style="left:398.3px;top:364.5px;background:#eeeffa;padding:0 2px;">Trigger</div>
<div class="lbl" style="left:2.7px;top:381.7px;">Scale:</div>
<div class="lbl" style="left:2.7px;top:402.5px;">X pos.(Div):</div>
<div class="inp" style="left:39px;top:377.2px;width:86.8px;height:19.3px;line-height:16.3px;padding-left:5.9px;">10 ms/Div</div>
<div class="inp" style="left:64.2px;top:398.6px;width:61.6px;height:19.0px;line-height:16.0px;padding-left:4.4px;">0</div>
<div class="lbl" style="left:134.8px;top:381.7px;">Scale:</div>
<div class="lbl" style="left:134.8px;top:402.5px;">Y pos.(Div):</div>
<div class="inp" style="left:171.1px;top:377.2px;width:86.3px;height:19.3px;line-height:16.3px;padding-left:6.1px;">500 mV/Div</div>
<div class="inp" style="left:196px;top:398.6px;width:61.4px;height:19.0px;line-height:16.0px;padding-left:4.6px;">0.6</div>
<div class="lbl" style="left:263.8px;top:381.7px;">Scale:</div>
<div class="lbl" style="left:263.8px;top:402.5px;">Y pos.(Div):</div>
<div class="inp" style="left:301.2px;top:377.2px;width:86.6px;height:19.3px;line-height:16.3px;padding-left:5.3px;">5&nbsp; V/Div</div>
<div class="inp" style="left:327.2px;top:398.6px;width:60.6px;height:19.0px;line-height:16.0px;padding-left:4.4px;">0</div>
<div class="lbl" style="left:395.4px;top:381.7px;">Edge:</div>
<div class="lbl" style="left:395.4px;top:402.5px;">Level:</div>
<div class="btn sel" style="left:8.1px;top:421.9px;width:23.8px;height:17.7px;line-height:15.3px;">Y/T</div>
<div class="btn" style="left:34px;top:421.9px;width:25.5px;height:17.7px;line-height:15.3px;">Add</div>
<div class="btn" style="left:64.2px;top:421.9px;width:26.0px;height:17.7px;line-height:15.3px;">B/A</div>
<div class="btn" style="left:91.9px;top:421.9px;width:27.4px;height:17.7px;line-height:15.3px;">A/B</div>
<div class="btn sel" style="left:135.9px;top:421.9px;width:22.9px;height:17.7px;line-height:15.3px;">AC</div>
<div class="btn" style="left:161.4px;top:421.9px;width:23.3px;height:17.7px;line-height:15.3px;">0</div>
<div class="btn" style="left:188.4px;top:421.9px;width:23.6px;height:17.7px;line-height:15.3px;">DC</div>
<div class="btn" style="left:266.4px;top:424px;width:23.2px;height:16.4px;line-height:14.0px;">AC</div>
<div class="btn" style="left:292.2px;top:424px;width:21.5px;height:16.4px;line-height:14.0px;">0</div>
<div class="btn sel" style="left:316.3px;top:424px;width:24.2px;height:16.4px;line-height:14.0px;">DC</div>
<div class="btn" style="left:343.1px;top:424px;width:16.4px;height:16.4px;line-height:14.0px;">-</div>
<div class="btn" style="left:397.5px;top:422.7px;width:50px;height:16.6px;line-height:14.4px;text-align:left;padding-left:3px;">Single</div>
<div class="abs" style="left:240.4px;top:423.1px;width:12px;height:12px;box-sizing:border-box;border-radius:50%;background:#fff;border:1px solid #c5c9e6;"><div style="position:absolute;left:2px;top:2px;width:6px;height:6px;border-radius:50%;background:#bcc1e6;"></div></div>
<div class="abs" style="left:375.0px;top:425.1px;width:12.4px;height:12.4px;box-sizing:border-box;border-radius:50%;background:#fff;border:1px solid #c9cde8;"></div>
</div>
</body>
</html>
